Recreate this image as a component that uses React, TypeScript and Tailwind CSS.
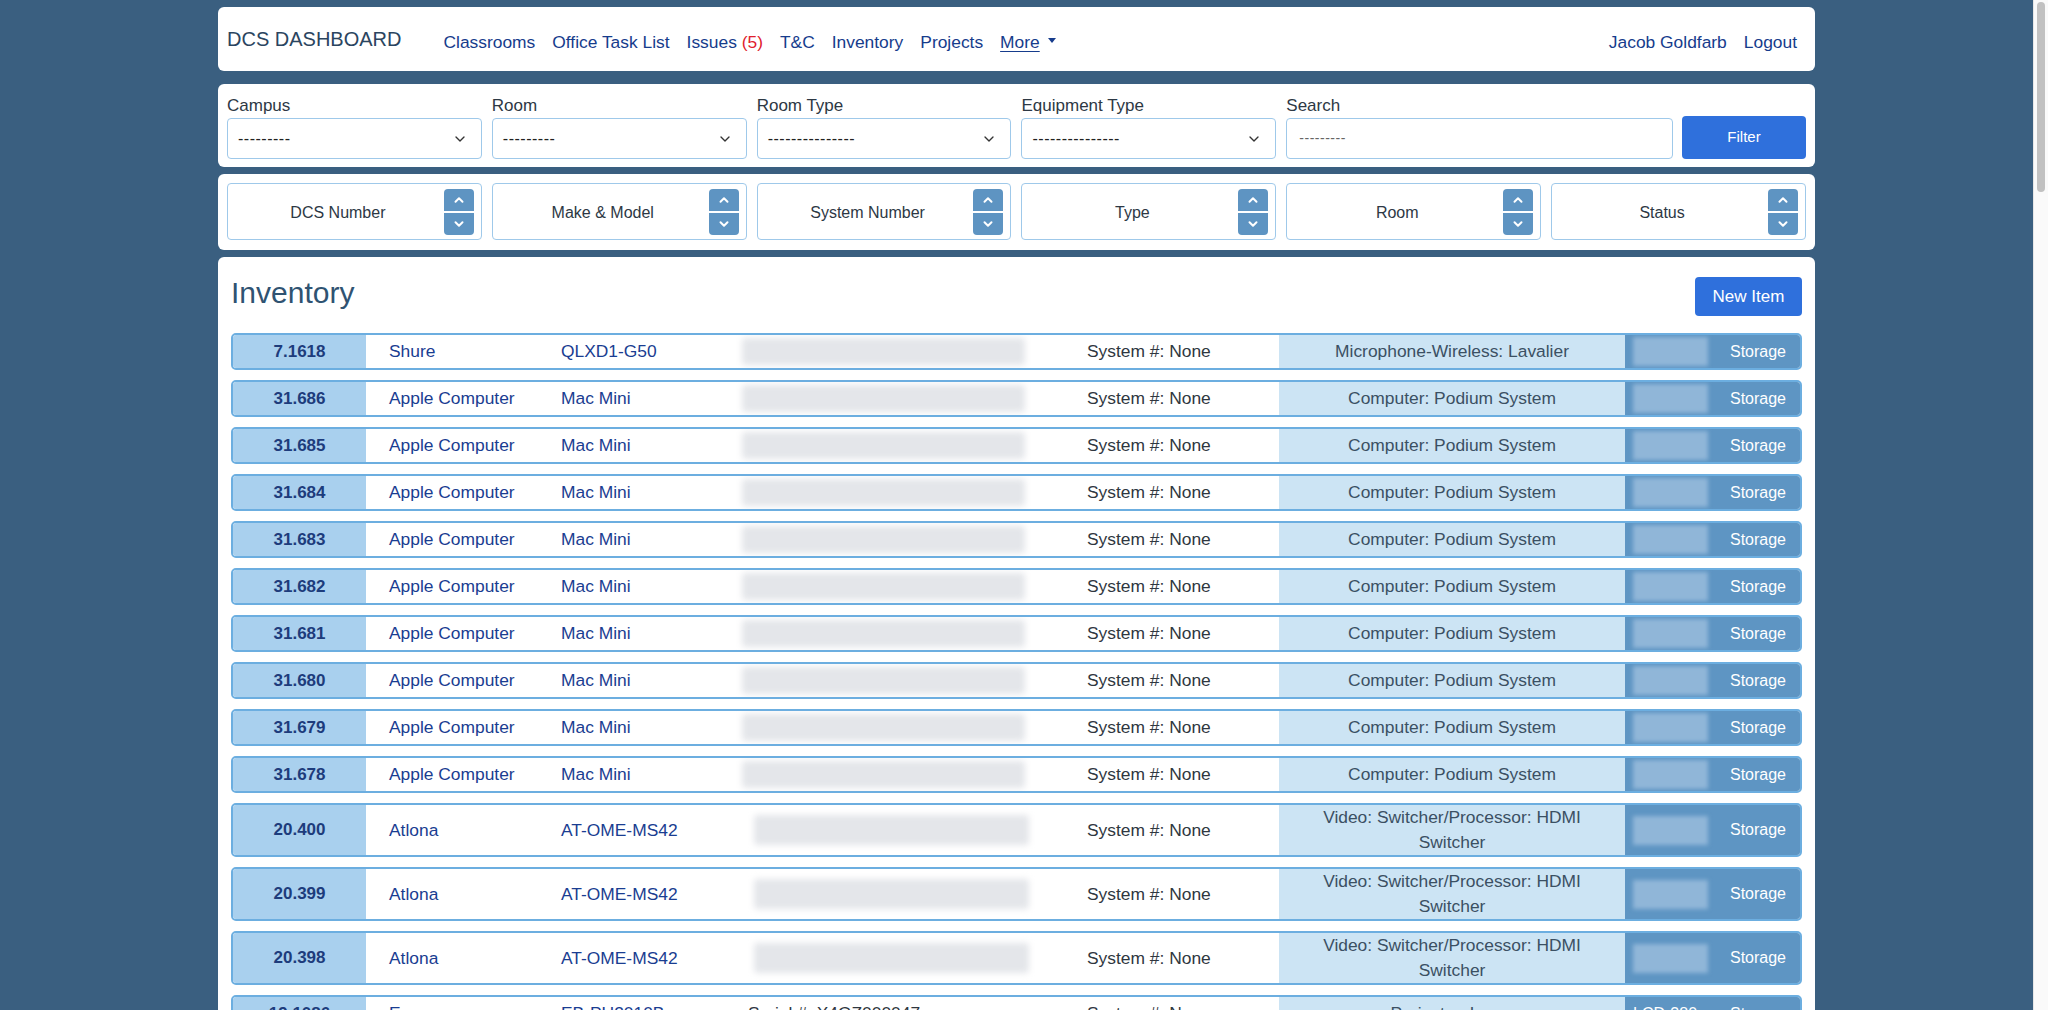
import React from "react";
import { ChevronDown, ChevronUp } from "lucide-react";

type Row = {
  dcs: string;
  make: string;
  model: string;
  type: string;
  tall?: boolean;
  blurMl: number;
  blurW: number;
};

const rows: Row[] = [
  { dcs: "7.1618", make: "Shure", model: "QLXD1-G50", type: "Microphone-Wireless: Lavalier", blurMl: 23, blurW: 283 },
  ...["31.686", "31.685", "31.684", "31.683", "31.682", "31.681", "31.680", "31.679", "31.678"].map((d) => ({
    dcs: d,
    make: "Apple Computer",
    model: "Mac Mini",
    type: "Computer: Podium System",
    blurMl: 23,
    blurW: 283,
  })),
  ...["20.400", "20.399", "20.398"].map((d) => ({
    dcs: d,
    make: "Atlona",
    model: "AT-OME-MS42",
    type: "Video: Switcher/Processor: HDMI Switcher",
    tall: true,
    blurMl: 35,
    blurW: 275,
  })),
];

function SelectBox({ label, value }: { label: string; value: string }) {
  return (
    <div className="flex flex-col">
      <div className="h-[25px] leading-[25px] text-[17px] text-[#2d3844]">{label}</div>
      <div className="h-[41px] rounded-[4px] border border-[#9fc9ea] bg-white flex items-center justify-between pl-[10px] pr-[13px]">
        <span className="text-[16px] text-[#222] tracking-[0.5px]">{value}</span>
        <ChevronDown size={16} strokeWidth={2} className="text-[#333]" />
      </div>
    </div>
  );
}

function SortBox({ label }: { label: string }) {
  return (
    <div className="h-[57px] rounded-[4px] border border-[#9fc9ea] bg-white flex items-center">
      <div className="flex-1 text-center text-[16px] text-[#2d3844] pl-[4px] pt-[2px]">{label}</div>
      <div className="w-[30px] mr-[7px] flex flex-col gap-[2px] mt-[1px]">
        <div className="h-[22px] rounded-t-[4px] bg-[#5e94c2] flex items-center justify-center">
          <ChevronUp size={14} strokeWidth={3.4} className="text-white" />
        </div>
        <div className="h-[22px] rounded-b-[4px] bg-[#5e94c2] flex items-center justify-center">
          <ChevronDown size={14} strokeWidth={3.4} className="text-white" />
        </div>
      </div>
    </div>
  );
}

function InvRow({ r }: { r: Row }) {
  return (
    <div className="flex mb-[10px] rounded-[5px] border-2 border-[#6caee0] overflow-hidden min-h-[37px] text-[17.4px]">
      <div className="w-[133px] shrink-0 bg-[#a9d0ee] flex items-center justify-center font-bold text-[#1d3c7c] text-[17px]">
        {r.dcs}
      </div>
      <div className="w-[172px] shrink-0 pl-[23px] flex items-center text-[#1a3d91] bg-white">{r.make}</div>
      <div className="w-[181px] shrink-0 pl-[23px] flex items-center text-[#1a3d91] bg-white">{r.model}</div>
      <div className="w-[345px] shrink-0 flex items-center bg-white">
        <div
          className={`${r.tall ? "h-[30px]" : "h-[27px]"} bg-[#e4e6ea] blur-[3px] rounded-[3px]`}
          style={{ marginLeft: r.blurMl, width: r.blurW }}
        />
      </div>
      <div className="w-[215px] shrink-0 pl-[23px] flex items-center text-[#2f3740] bg-white">System #: None</div>
      <div className="w-[346px] shrink-0 bg-[#cce4f4] flex items-center justify-center text-center px-[28px] leading-[25px] text-[#3b5063]">
        {r.type}
      </div>
      <div className="flex-1 bg-[#5e95c3] flex items-center justify-between pl-[8px] pr-[14px]">
        <div className="w-[75px] h-[29px] bg-[#90b6d8] blur-[2px]" />
        <span className="text-white text-[16px]">Storage</span>
      </div>
    </div>
  );
}

export default function App() {
  return (
    <div className="h-[1010px] overflow-hidden flex bg-[#3a5f80] font-['Liberation_Sans',Arial,sans-serif]">
      <div className="flex-1">
        <div className="w-[1597px] mx-auto">
          {/* Navbar */}
          <div className="mt-[7px] h-[64px] bg-white rounded-[6px] flex items-center pl-[9px] pr-[18px]">
            <div className="text-[20px] text-[#2b4560] mr-[42px]">DCS DASHBOARD</div>
            <div className="flex items-center gap-[17px] text-[17.4px] text-[#163c8c] pt-[6px]">
              <span>Classrooms</span>
              <span>Office Task List</span>
              <span>
                Issues <span className="text-[#e0202c]">(5)</span>
              </span>
              <span>T&amp;C</span>
              <span>Inventory</span>
              <span>Projects</span>
              <span className="flex items-center gap-[8px]">
                <span className="underline underline-offset-[3px]">More</span>
                <span className="w-0 h-0 border-l-[4.5px] border-r-[4.5px] border-t-[5px] border-l-transparent border-r-transparent border-t-[#163c8c] mt-[-2px]" />
              </span>
            </div>
            <div className="ml-auto flex items-center gap-[17px] text-[17.4px] text-[#163c8c] pt-[6px]">
              <span>Jacob Goldfarb</span>
              <span>Logout</span>
            </div>
          </div>

          {/* Filter card */}
          <div className="mt-[13px] bg-white rounded-[6px] px-[9px] pt-[9px] pb-[8px] grid grid-cols-6 gap-x-[10px]">
            <SelectBox label="Campus" value="---------" />
            <SelectBox label="Room" value="---------" />
            <SelectBox label="Room Type" value="---------------" />
            <SelectBox label="Equipment Type" value="---------------" />
            <div className="col-span-2 flex gap-[9px]">
              <div className="flex-1 flex flex-col">
                <div className="h-[25px] leading-[25px] text-[17px] text-[#2d3844]">Search</div>
                <div className="h-[41px] rounded-[4px] border border-[#9fc9ea] bg-white flex items-center pl-[12px]">
                  <span className="text-[14px] text-[#666] tracking-[0.5px]">---------</span>
                </div>
              </div>
              <div className="w-[124px] self-end h-[43px] rounded-[4px] bg-[#2f70dc] text-white text-[15px] flex items-center justify-center">
                Filter
              </div>
            </div>
          </div>

          {/* Sort card */}
          <div className="mt-[7px] bg-white rounded-[6px] p-[9px] pb-[10px] grid grid-cols-6 gap-[10px]">
            <SortBox label="DCS Number" />
            <SortBox label="Make & Model" />
            <SortBox label="System Number" />
            <SortBox label="Type" />
            <SortBox label="Room" />
            <SortBox label="Status" />
          </div>

          {/* Inventory */}
          <div className="mt-[7px] bg-white rounded-t-[6px] px-[13px] pt-[20px] h-[800px]">
            <div className="flex items-center justify-between">
              <div className="text-[30px] text-[#2f5372] leading-[36px] -mt-[7px]">Inventory</div>
              <div className="w-[107px] h-[39px] rounded-[4px] bg-[#2f70dc] text-white text-[17px] flex items-center justify-center">
                New Item
              </div>
            </div>
            <div className="mt-[17px]">
              {rows.map((r, i) => (
                <InvRow key={i} r={r} />
              ))}
              <div className="flex rounded-[5px] border-2 border-[#6caee0] overflow-hidden min-h-[37px] text-[17.4px]">
                <div className="w-[133px] shrink-0 bg-[#a9d0ee] flex items-center justify-center font-bold text-[#1d3c7c] text-[17px]">
                  19.1086
                </div>
                <div className="w-[172px] shrink-0 pl-[23px] flex items-center text-[#1a3d91]">Epson</div>
                <div className="w-[181px] shrink-0 pl-[23px] flex items-center text-[#1a3d91]">EB-PU2010B</div>
                <div className="w-[345px] shrink-0 pl-[29px] flex items-center text-[#2f3740]">Serial #: X4GZ000047</div>
                <div className="w-[215px] shrink-0 pl-[23px] flex items-center text-[#2f3740]">System #: None</div>
                <div className="w-[346px] shrink-0 bg-[#cce4f4] flex items-center justify-center text-[#3b5063]">
                  Projector: Laser
                </div>
                <div className="flex-1 bg-[#5e95c3] flex items-center justify-between pl-[8px] pr-[14px] text-white text-[16px]">
                  <span>LCD-380</span>
                  <span>Storage</span>
                </div>
              </div>
            </div>
          </div>
        </div>
      </div>
      {/* Fake scrollbar */}
      <div className="w-[15px] h-full bg-[#fafafa] border-l border-[#e6e6e6] pt-[2px]">
        <div className="w-[8px] h-[190px] mx-auto rounded-full bg-[#c1c1c1]" />
      </div>
    </div>
  );
}
